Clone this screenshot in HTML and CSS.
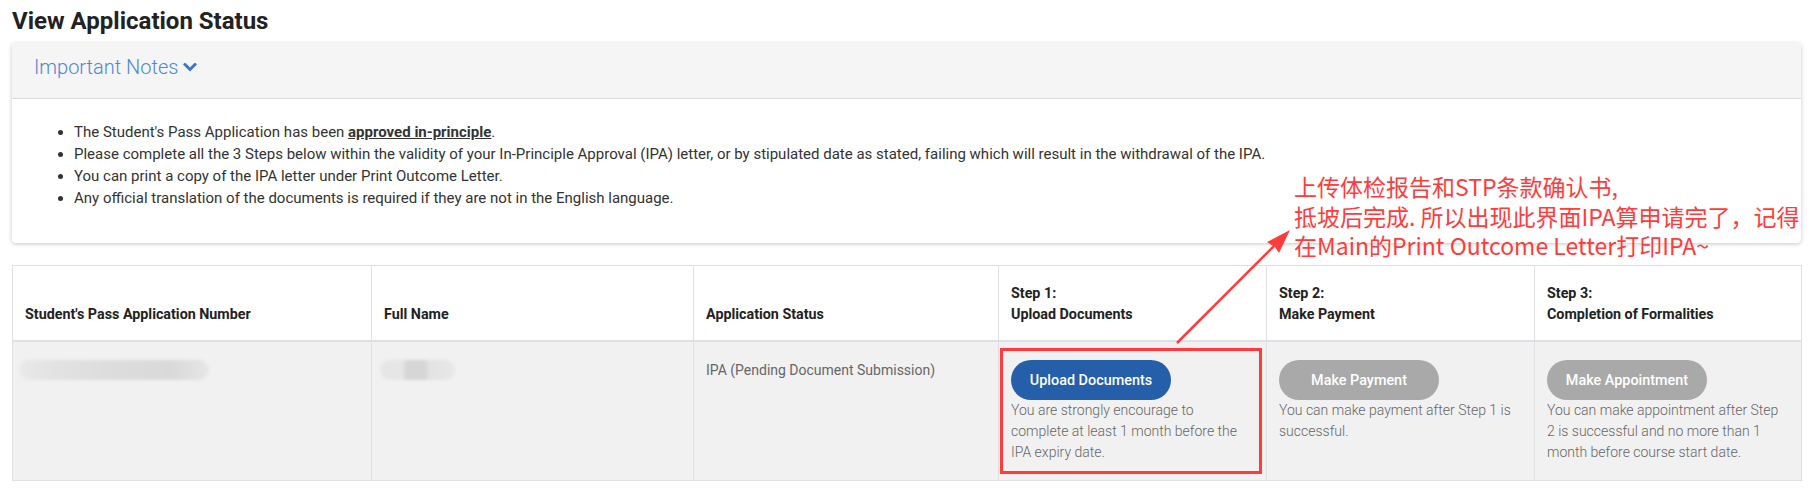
FILE: index.html
```html
<!DOCTYPE html>
<html lang="en">
<head>
<meta charset="utf-8">
<title>View Application Status</title>
<link rel="stylesheet" href="styles.css">
</head>
<body>
<div class="page">
  <h1 class="title">View Application Status</h1>

  <section class="card">
    <div class="card-header">
      <span class="notes-title">Important Notes</span>
      <svg class="chevron" width="14" height="9" viewBox="0 0 14 9"><polyline points="2,1.5 7,6.5 12,1.5" fill="none" stroke="#3d79c2" stroke-width="3" stroke-linecap="square"/></svg>
    </div>
    <div class="card-body">
      <ul class="notes">
        <li>The Student's Pass Application has been <b class="ul">approved in-principle</b>.</li>
        <li>Please complete all the 3 Steps below within the validity of your In-Principle Approval (IPA) letter, or by stipulated date as stated, failing which will result in the withdrawal of the IPA.</li>
        <li>You can print a copy of the IPA letter under Print Outcome Letter.</li>
        <li>Any official translation of the documents is required if they are not in the English language.</li>
      </ul>
    </div>
  </section>

  <table class="status">
    <colgroup>
      <col class="c1"><col class="c2"><col class="c3"><col class="c4"><col class="c5"><col class="c6">
    </colgroup>
    <thead>
      <tr>
        <th>Student's Pass Application Number</th>
        <th>Full Name</th>
        <th>Application Status</th>
        <th>Step 1:<br>Upload Documents</th>
        <th>Step 2:<br>Make Payment</th>
        <th>Step 3:<br>Completion of Formalities</th>
      </tr>
    </thead>
    <tbody>
      <tr>
        <td><div class="blur blur-num"></div></td>
        <td><div class="blur blur-name"></div></td>
        <td class="status-text">IPA (Pending Document Submission)</td>
        <td>
          <div class="btn btn-blue">Upload Documents</div>
          <p class="desc">You are strongly encourage to complete at least 1 month before the IPA expiry date.</p>
        </td>
        <td>
          <div class="btn btn-gray">Make Payment</div>
          <p class="desc">You can make payment after Step 1 is successful.</p>
        </td>
        <td>
          <div class="btn btn-gray">Make Appointment</div>
          <p class="desc">You can make appointment after Step 2 is successful and no more than 1 month before course start date.</p>
        </td>
      </tr>
    </tbody>
  </table>
</div>

<div class="redbox"></div>
<svg class="arrow" width="1813" height="496" viewBox="0 0 1813 496">
  <line x1="1177" y1="343" x2="1274" y2="246" stroke="#ff3b3b" stroke-width="2.5"/>
  <polygon points="1290,230 1279,253 1275,247 1267,242" fill="#ff3b3b"/>
</svg>
<div class="annotation">上传体检报告和STP条款确认书,<br>抵坡后完成. 所以出现此界面IPA算申请完了，记得<br>在Main的Print Outcome Letter打印IPA~</div>
</body>
</html>
```

FILE: styles.css
```css
html, body {
  margin: 0;
  padding: 0;
  background: #fff;
}
body {
  font-family: Roboto, "Liberation Sans", sans-serif;
  color: #333;
  position: relative;
  width: 1813px;
  height: 496px;
  overflow: hidden;
}
.page {
  padding: 7px 12px 0;
}
.title {
  margin: 0;
  font-size: 24px;
  line-height: 28px;
  font-weight: 700;
  color: #222;
}
.card {
  margin-top: 8px;
  background: #fff;
  border-radius: 4px;
  box-shadow: 0 1px 4px rgba(0,0,0,0.22);
  overflow: hidden;
}
.card-header {
  background: #f5f5f5;
  border-bottom: 1px solid #dcdcdc;
  padding: 12px 22px 19px;
  display: flex;
  align-items: center;
  gap: 5px;
  height: 24px;
}
.notes-title {
  font-size: 20px;
  line-height: 24px;
  font-weight: 300;
  color: #4f87cf;
}
.chevron {
  margin-top: 1px;
}
.card-body {
  padding: 22px 22px 36px;
  height: 86px;
}
.notes {
  margin: 0;
  padding-left: 40px;
  font-size: 15px;
  line-height: 22px;
  color: #333;
}
.notes li {
  width: fit-content;
}
.ul {
  font-weight: 700;
  text-decoration: underline;
}
.status {
  margin-top: 22px;
  width: 100%;
  border-collapse: collapse;
  table-layout: fixed;
  font-size: 14.3px;
}
.c1 { width: 359px; }
.c2 { width: 322px; }
.c3 { width: 305px; }
.c4 { width: 268px; }
.c5 { width: 268px; }
.c6 { width: 267px; }
.status th {
  text-align: left;
  vertical-align: bottom;
  font-weight: 700;
  line-height: 21px;
  color: #222;
  padding: 16px 12px 15px;
  border: 1px solid #dfe0e3;
  border-bottom: 2px solid #dfe0e3;
  height: 43px;
}
.status td {
  background: #f1f1f1;
  vertical-align: top;
  padding: 18px 12px 17px;
  border: 1px solid #dfe0e3;
  line-height: 21px;
  font-size: 14px;
}
.status-text {
  color: #666;
  font-weight: 400;
}
.blur {
  height: 20px;
  filter: blur(1.5px);
  border-radius: 10px;
}
.blur-num {
  width: 190px;
  margin-left: -6px;
  background: linear-gradient(90deg, #e9e9e9 0, #e2e2e2 20%, #dcdcdc 50%, #d9d9d9 80%, #e6e6e6 100%);
}
.blur-name {
  width: 75px;
  margin-left: -4px;
  background: linear-gradient(90deg, #e6e6e6 0, #e6e6e6 30%, #d6d6d6 35%, #d6d6d6 60%, #e2e2e2 65%, #e8e8e8 100%);
}
.btn {
  width: 160px;
  height: 40px;
  border-radius: 20px;
  color: #fff;
  font-weight: 500;
  font-size: 14.4px;
  display: flex;
  align-items: center;
  justify-content: center;
}
.btn-blue { background: #255ea9; }
.btn-gray { background: #a9a9a9; }
.desc {
  margin: 0;
  color: #666;
  font-weight: 300;
}
.redbox {
  position: absolute;
  left: 1000px;
  top: 348px;
  width: 256px;
  height: 120px;
  border: 3px solid #ff3b3b;
}
.arrow {
  position: absolute;
  left: 0;
  top: 0;
  pointer-events: none;
}
.annotation {
  position: absolute;
  left: 1294px;
  top: 172px;
  font-family: "Noto Sans CJK SC", "Noto Sans", sans-serif;
  font-size: 23px;
  line-height: 29.5px;
  color: #ff3b3b;
  white-space: nowrap;
}
```
